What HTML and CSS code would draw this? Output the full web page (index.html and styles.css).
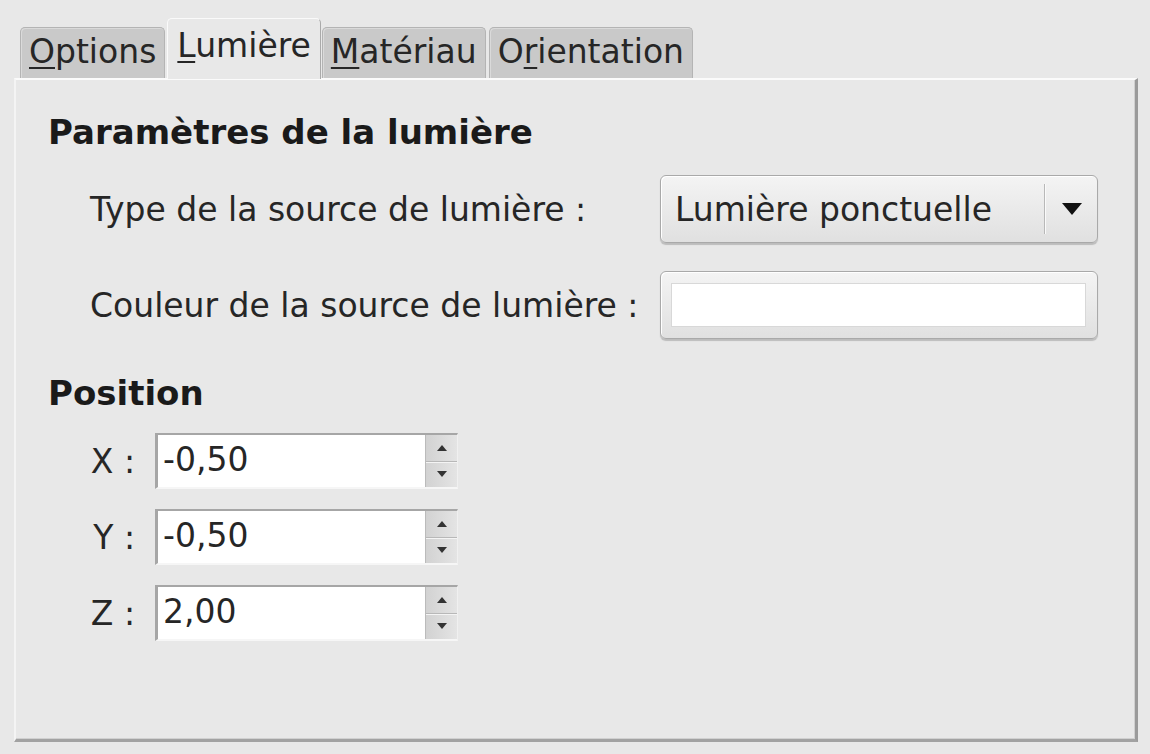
FILE: index.html
```html
<!DOCTYPE html>
<html lang="fr">

<head>
    <meta charset="UTF-8">
    <title>Lumière</title>
    <link rel="stylesheet" href="styles.css">
</head>

<body>
    <div class="notebook">
        <div class="tabs">
            <div class="tab"><u>O</u>ptions</div>
            <div class="tab active"><u>L</u>umière</div>
            <div class="tab"><u>M</u>atériau</div>
            <div class="tab">O<u>r</u>ientation</div>
        </div>
        <div class="page">
            <h2 class="title">Paramètres de la lumière</h2>
            <div class="light_grid">
                <span class="label">Type de la source de lumière :</span>
                <div class="combo">
                    <span class="combo_text">Lumière ponctuelle</span>
                    <span class="combo_sep"></span>
                    <span class="combo_arrow"></span>
                </div>
                <span class="label">Couleur de la source de lumière :</span>
                <div class="color_btn">
                    <div class="swatch"></div>
                </div>
            </div>
            <h2 class="title">Position</h2>
            <div class="pos_grid">
                <span class="axis">X :</span>
                <div class="spin">
                    <span class="spin_value">-0,50</span>
                    <div class="spin_btns"><span class="up"></span><span class="down"></span></div>
                </div>
                <span class="axis">Y :</span>
                <div class="spin">
                    <span class="spin_value">-0,50</span>
                    <div class="spin_btns"><span class="up"></span><span class="down"></span></div>
                </div>
                <span class="axis">Z :</span>
                <div class="spin">
                    <span class="spin_value">2,00</span>
                    <div class="spin_btns"><span class="up"></span><span class="down"></span></div>
                </div>
            </div>
        </div>
    </div>
</body>

</html>
```

FILE: styles.css
```css
html {
    margin: 0;
    padding: 0;
    background-color: #e8e8e8;
}

body {
    margin: 0;
    font-family: "DejaVu Sans", "Noto Sans", sans-serif;
    font-size: 33px;
    color: #262626;
}

.notebook {
    padding: 18px 12px 0 14px;
}

.tabs {
    display: flex;
    align-items: flex-end;
    padding-left: 6px;
    height: 60px;
}

.tab {
    height: 51px;
    line-height: 48px;
    padding: 0 8px;
    margin-right: 3px;
    background-color: #c9c9c9;
    border: 1px solid #b4b4b4;
    border-bottom: 0;
    border-radius: 5px 5px 0 0;
    box-shadow: inset 1px 1px 0 #dadada;
    box-sizing: border-box;
}

.tab u {
    text-decoration-thickness: 2px;
    text-underline-offset: 4px;
}

.tab.active {
    height: 61px;
    line-height: 54px;
    padding: 0 9px;
    margin-left: -1px;
    margin-right: 1px;
    background-color: #e8e8e8;
    border-color: #fafafa #aaaaaa #e8e8e8 #fafafa;
    box-shadow: none;
    position: relative;
    top: 1px;
}

.page {
    height: 664px;
    box-sizing: border-box;
    padding: 32px 0 0 32px;
    border-top: 2px solid #fbfbfb;
    border-left: 2px solid #f4f4f4;
    border-right: 3px solid #9a9a9a;
    border-bottom: 3px solid #a2a2a2;
    box-shadow: inset -1px -1px 0 #d0d0d0;
}

.page .title {
    margin: 0;
    font-size: 34px;
    font-weight: bold;
    color: #1a1a1a;
    line-height: 40px;
}

.light_grid {
    display: grid;
    grid-template-columns: 570px 438px;
    row-gap: 28px;
    align-items: center;
    margin: 23px 0 34px 42px;
}

.combo, .color_btn {
    height: 68px;
    box-sizing: border-box;
    border: 1px solid #a9a9a9;
    border-radius: 6px;
    background: linear-gradient(#f4f4f4, #e0e0e0);
    box-shadow: inset 1px 1px 0 #ffffff, 0 2px 1px #bcbcbc;
}

.combo {
    display: flex;
    align-items: center;
    padding-left: 14px;
}

.combo_text {
    flex: 1;
}

.combo_sep {
    width: 1px;
    height: 50px;
    background-color: #b8b8b8;
    box-shadow: 1px 0 0 #fafafa;
}

.combo_arrow {
    width: 0;
    height: 0;
    margin: 0 15px 0 17px;
    border-left: 10px solid transparent;
    border-right: 10px solid transparent;
    border-top: 12px solid #111;
}

.color_btn {
    padding: 11px 11px 11px 10px;
}

.swatch {
    height: 100%;
    background-color: #ffffff;
    border: 1px solid #d8d8d8;
    box-sizing: border-box;
}

.pos_grid {
    display: grid;
    grid-template-columns: 87px 303px;
    column-gap: 20px;
    row-gap: 20px;
    align-items: center;
    margin: 20px 0 0 0;
}

.axis {
    text-align: right;
}

.spin {
    display: flex;
    height: 56px;
    box-sizing: border-box;
    background-color: #fff;
    border-top: 2px solid #a6a6a6;
    border-left: 3px solid #a6a6a6;
    border-bottom: 2px solid #f6f6f6;
    border-right: 1px solid #f0f0f0;
}

.spin_value {
    flex: 1;
    line-height: 50px;
    padding-left: 5px;
}

.spin_btns {
    display: flex;
    flex-direction: column;
    width: 31px;
    background: linear-gradient(90deg, #d2d2d2, #e4e4e4);
    border-left: 1px solid #bbbbbb;
}

.spin_btns span {
    flex: 1;
    display: flex;
    align-items: center;
    justify-content: center;
}

.spin_btns .up {
    border-bottom: 1px solid #b8b8b8;
    box-shadow: 0 1px 0 #f4f4f4;
}

.spin_btns .up::before, .spin_btns .down::before {
    content: "";
    border-left: 5px solid transparent;
    border-right: 5px solid transparent;
}

.spin_btns .up::before {
    border-bottom: 6px solid #333;
}

.spin_btns .down::before {
    border-top: 6px solid #333;
}
```
